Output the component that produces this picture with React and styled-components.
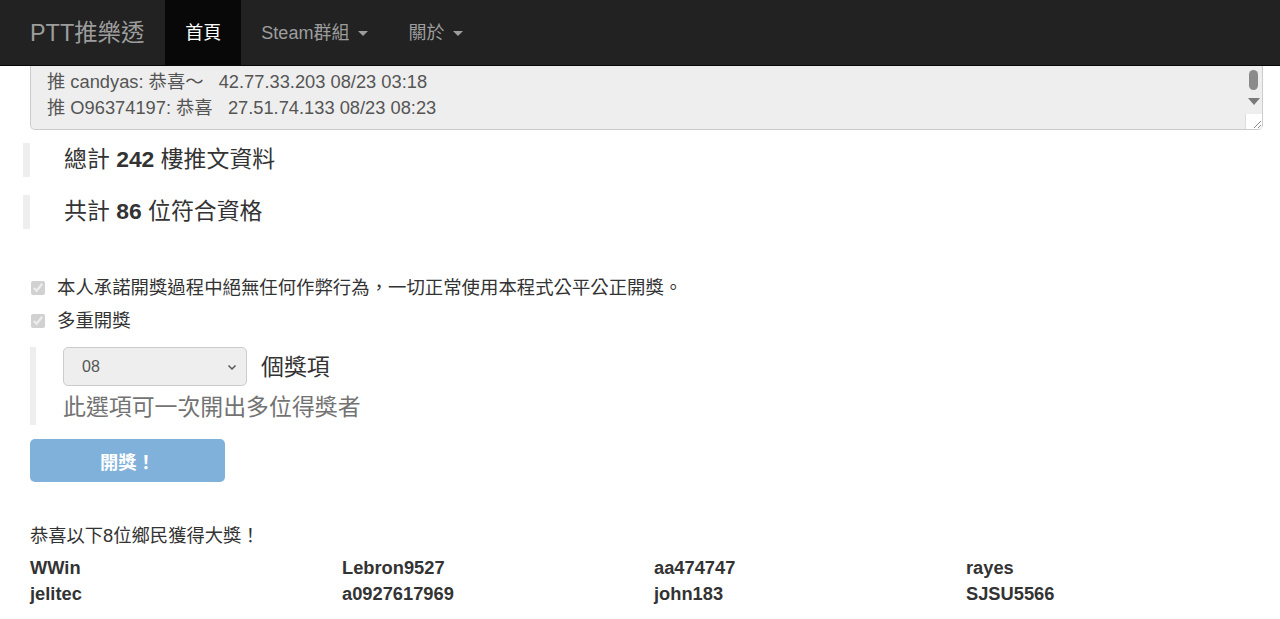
import React from "react";
import styled, { createGlobalStyle } from "styled-components";

const Global = createGlobalStyle`
  html, body { margin: 0; padding: 0; background: #fff; }
  body {
    font-family: "Liberation Sans", Arial, "Noto Sans CJK TC", sans-serif;
    color: #333;
    font-size: 18.3px;
    line-height: 26px;
  }
  * { box-sizing: border-box; }
`;

const Navbar = styled.nav`
  height: 66px;
  background: #222;
  border-bottom: 1px solid #080808;
  display: flex;
  align-items: stretch;
`;

const Brand = styled.a`
  display: flex;
  align-items: center;
  padding: 0 21px 0 30px;
  font-size: 23.4px;
  color: #9d9d9d;
  text-decoration: none;
`;

const NavList = styled.ul`
  display: flex;
  list-style: none;
  margin: 0;
  padding: 0;
`;

const NavItem = styled.li`
  display: flex;
  align-items: center;
  padding: 0 20px;
  font-size: 18px;
  color: ${(p) => (p.$active ? "#fff" : "#9d9d9d")};
  background: ${(p) => (p.$active ? "#080808" : "transparent")};
`;

const Caret = styled.span`
  display: inline-block;
  width: 0;
  height: 0;
  margin-left: 9px;
  border-top: 5px solid #9d9d9d;
  border-left: 5px solid transparent;
  border-right: 5px solid transparent;
  margin-top: 2px;
`;

const Main = styled.main`
  padding: 0 17px 30px 30px;
`;

const TextBox = styled.div`
  position: relative;
  background: #eee;
  border: 1px solid #ccc;
  border-top: none;
  border-radius: 0 0 5px 5px;
  padding: 3px 30px 8px 16px;
  color: #555;
  font-size: 18.3px;
  line-height: 26px;
  white-space: pre;
`;

const ScrollBar = styled.div`
  position: absolute;
  top: 0;
  right: 0;
  bottom: 0;
  width: 17px;
  background: #eee;
  display: flex;
  flex-direction: column;
  align-items: center;
`;

const Thumb = styled.div`
  width: 9px;
  height: 20px;
  margin-top: 4px;
  border-radius: 5px;
  background: #8a8a8a;
`;

const Arrow = styled.div`
  margin-top: 8px;
  width: 0;
  height: 0;
  border-top: 7px solid #7a7a7a;
  border-left: 6px solid transparent;
  border-right: 6px solid transparent;
`;

const Grip = styled.div`
  margin-top: auto;
  width: 17px;
  height: 15px;
  background: #fff;
  border-left: 1px solid #ddd;
  border-bottom-right-radius: 5px;
  display: flex;
  align-items: flex-end;
  justify-content: flex-end;
`;

const Quote = styled.blockquote`
  margin: ${(p) => p.$mt || 0}px 0 0 -7px;
  padding: 0 0 0 34px;
  border-left: 7px solid #eee;
  font-size: 22.9px;
  line-height: 33px;
  height: 34px;
`;

const Checks = styled.div`
  margin-top: 46px;
  display: flex;
  flex-direction: column;
  gap: 7px;
`;

const CheckRow = styled.label`
  display: flex;
  align-items: center;
  height: 26px;
  font-size: 18.4px;
  color: #333;
`;

const Box = styled.input`
  width: 14px;
  height: 14px;
  margin: 0 12px 0 1px;
`;

const OptionGroup = styled.div`
  margin-top: 13px;
  border-left: 6px solid #eee;
  padding-left: 27px;
  height: 78px;
`;

const SelectRow = styled.div`
  display: flex;
  align-items: center;
  gap: 14px;
`;

const FakeSelect = styled.div`
  width: 184px;
  height: 39px;
  background: #eee;
  border: 1px solid #ccc;
  border-radius: 5px;
  display: flex;
  align-items: center;
  justify-content: space-between;
  padding: 0 7px 0 18px;
  font-size: 16px;
  color: #555;
`;

const UnitText = styled.span`
  font-size: 22.9px;
`;

const Help = styled.div`
  font-size: 22.9px;
  color: #737373;
  padding-top: 3px;
  line-height: 36px;
`;

const DrawButton = styled.button`
  margin-top: 14px;
  width: 195px;
  height: 43px;
  border: none;
  border-radius: 5px;
  background: #80b1db;
  color: #fff;
  font-family: inherit;
  font-size: 18.3px;
  font-weight: bold;
  cursor: not-allowed;
`;

const Congrats = styled.div`
  margin-top: 41px;
  font-size: 18.3px;
  line-height: 26px;
`;

const Winners = styled.div`
  margin-top: 6px;
  display: grid;
  grid-template-columns: repeat(4, 312px);
  font-size: 18.3px;
  font-weight: bold;
  line-height: 26px;
`;

const winners = [
  "WWin", "Lebron9527", "aa474747", "rayes",
  "jelitec", "a0927617969", "john183", "SJSU5566",
];

export default function App() {
  return (
    <>
      <Global />
      <Navbar>
        <Brand>PTT推樂透</Brand>
        <NavList>
          <NavItem $active>首頁</NavItem>
          <NavItem>Steam群組<Caret /></NavItem>
          <NavItem>關於<Caret /></NavItem>
        </NavList>
      </Navbar>
      <Main>
        <TextBox>
          {"推 candyas: 恭喜～   42.77.33.203 08/23 03:18\n推 O96374197: 恭喜   27.51.74.133 08/23 08:23"}
          <ScrollBar>
            <Thumb />
            <Arrow />
            <Grip>
              <svg width="10" height="10" viewBox="0 0 10 10">
                <path d="M2 9 L9 2 M6 9 L9 6" stroke="#888" strokeWidth="1" />
              </svg>
            </Grip>
          </ScrollBar>
        </TextBox>
        <Quote $mt={13}>總計 <b>242</b> 樓推文資料</Quote>
        <Quote $mt={18}>共計 <b>86</b> 位符合資格</Quote>
        <Checks>
          <CheckRow>
            <Box type="checkbox" checked disabled readOnly />
            本人承諾開獎過程中絕無任何作弊行為，一切正常使用本程式公平公正開獎。
          </CheckRow>
          <CheckRow>
            <Box type="checkbox" checked disabled readOnly />
            多重開獎
          </CheckRow>
        </Checks>
        <OptionGroup>
          <SelectRow>
            <FakeSelect>
              <span>08</span>
              <svg width="14" height="14" viewBox="0 0 14 14">
                <path d="M3.5 5.5 L7 9 L10.5 5.5" fill="none" stroke="#555" strokeWidth="1.5" />
              </svg>
            </FakeSelect>
            <UnitText>個獎項</UnitText>
          </SelectRow>
          <Help>此選項可一次開出多位得獎者</Help>
        </OptionGroup>
        <DrawButton disabled>開獎！</DrawButton>
        <Congrats>恭喜以下8位鄉民獲得大獎！</Congrats>
        <Winners>
          {winners.map((w) => (
            <div key={w}>{w}</div>
          ))}
        </Winners>
      </Main>
    </>
  );
}
